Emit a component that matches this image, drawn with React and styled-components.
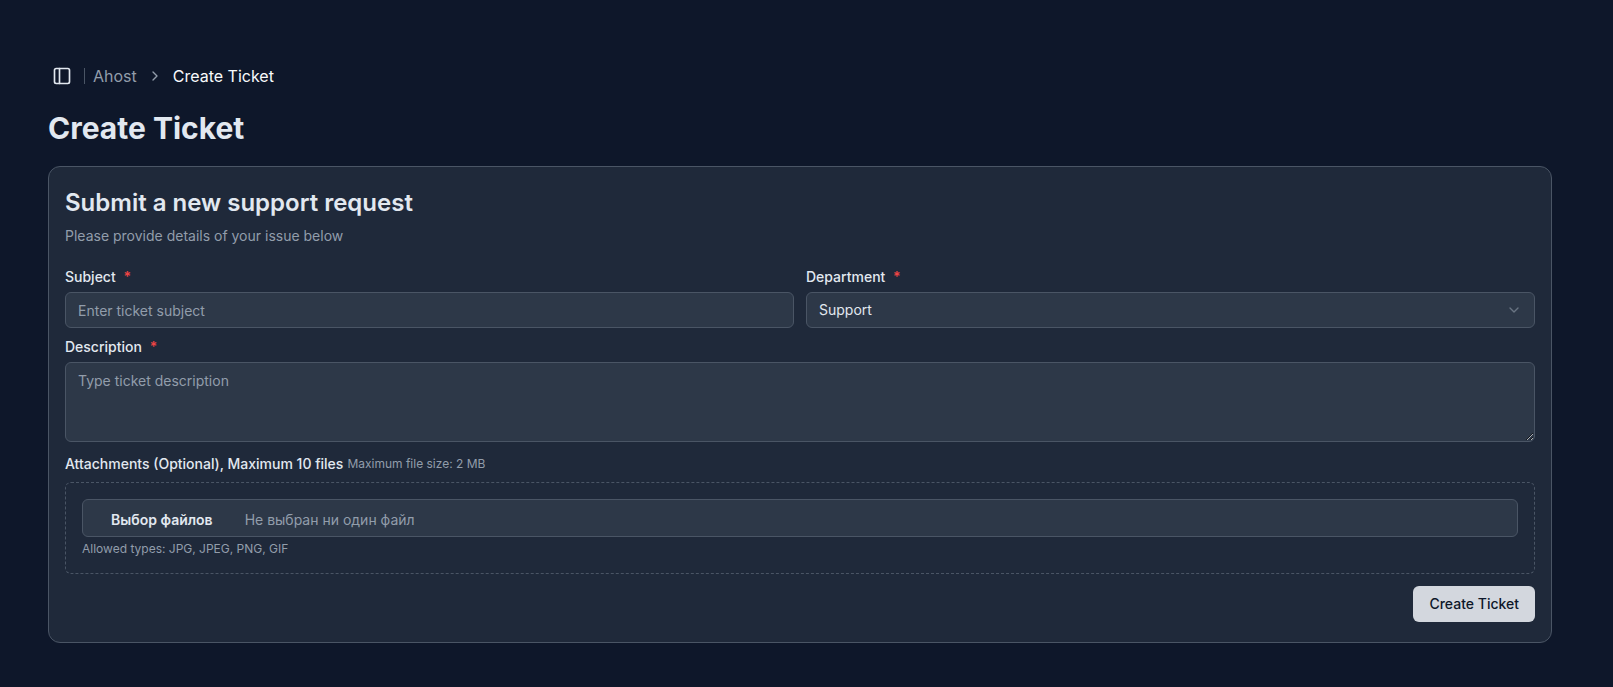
import React, { useState } from 'react';
import styled, { createGlobalStyle, css } from 'styled-components';
import { ChevronDown, ChevronRight, PanelLeft } from 'lucide-react';

const theme = {
    background: '#0e172a',
    card: '#1f293a',
    field: '#2d3848',
    border: '#4a5565',
    text: '#e2e8f0',
    bright: '#f8fafc',
    muted: '#929dab',
    danger: '#ef4444',
    button: '#d3d7de',
};

const GlobalStyle = createGlobalStyle`
    *, *:before, *:after {
        box-sizing: border-box;
    }

    body {
        margin: 0;
        background: ${theme.background};
        color: ${theme.text};
        font-family: Inter, sans-serif;
        font-size: 14px;
        line-height: 20px;
    }

    button, input, select, textarea {
        font: inherit;
        color: inherit;
    }
`;

const Page = styled.main`
    padding: 62px 61px 44px 48px;
`;

const TopBar = styled.header`
    display: flex;
    align-items: center;
    height: 28px;
`;

const IconButton = styled.button`
    display: flex;
    align-items: center;
    justify-content: center;
    width: 28px;
    height: 28px;
    padding: 0;
    border: none;
    border-radius: 6px;
    background: none;
    color: ${theme.text};
    cursor: pointer;
`;

const Separator = styled.span`
    width: 1px;
    height: 16px;
    margin: 0 8px;
    background: ${theme.border};
`;

const Breadcrumb = styled.nav`
    display: flex;
    align-items: center;
    gap: 10px;
    color: ${theme.muted};
    font-size: 16px;
    line-height: 24px;
`;

const Crumb = styled.a`
    color: ${props => props.$current ? theme.bright : theme.muted};
    text-decoration: none;
`;

const PageTitle = styled.h1`
    margin: 20px 0;
    font-size: 30px;
    line-height: 36px;
    font-weight: 700;
`;

const Card = styled.section`
    padding: 16px 16px 20px;
    border: 1px solid ${theme.border};
    border-radius: 12px;
    background: ${theme.card};
`;

const CardTitle = styled.h2`
    margin: 4px 0 7px;
    font-size: 24px;
    line-height: 32px;
    font-weight: 600;
`;

const CardText = styled.p`
    margin: 0;
    color: ${theme.muted};
`;

const Form = styled.form`
    display: flex;
    flex-direction: column;
    gap: 12px;
    margin-top: 24px;
`;

const Columns = styled.div`
    display: grid;
    grid-template-columns: 1fr 1fr;
    gap: 12px;
`;

const Field = styled.div`
    display: flex;
    flex-direction: column;
    gap: 8px;
`;

const Label = styled.label`
    font-weight: 500;
    line-height: 14px;
`;

const Required = styled.span`
    margin-left: 4px;
    color: ${theme.danger};
    font-weight: 600;
`;

const control = css`
    display: block;
    width: 100%;
    border: 1px solid ${theme.border};
    border-radius: 6px;
    outline: none;
    background: ${theme.field};

    &::placeholder {
        color: ${theme.muted};
        opacity: 1;
    }
`;

const Input = styled.input`
    ${control}
    height: 36px;
    padding: 4px 12px;
`;

const TextArea = styled.textarea`
    ${control}
    height: 80px;
    padding: 8px 12px;
    resize: vertical;
`;

const SelectWrapper = styled.div`
    display: grid;
    align-items: center;

    & > * {
        grid-area: 1 / 1;
    }

    & > svg {
        justify-self: end;
        margin-right: 13px;
        color: ${theme.muted};
        opacity: .6;
        pointer-events: none;
    }
`;

const Select = styled.select`
    ${control}
    height: 36px;
    padding: 0 36px 0 12px;
    appearance: none;
`;

const LabelRow = styled.div`
    display: flex;
    align-items: center;
    gap: 4px;
    height: 20px;
`;

const Hint = styled.span`
    color: ${theme.muted};
    font-size: 12px;
    line-height: 16px;
`;

const DropZone = styled.div`
    display: flex;
    flex-direction: column;
    gap: 4px;
    padding: 16px;
    border: 1px dashed ${theme.border};
    border-radius: 6px;
`;

const FilePicker = styled.label`
    ${control}
    display: flex;
    gap: 32px;
    height: 38px;
    padding: 10px 28px 6px;
    color: ${theme.muted};
    cursor: pointer;
`;

const FileButton = styled.span`
    color: ${theme.text};
    font-weight: 600;
`;

const HiddenInput = styled.input`
    position: absolute;
    width: 1px;
    height: 1px;
    overflow: hidden;
    clip-path: inset(50%);
`;

const Actions = styled.div`
    display: flex;
    justify-content: flex-end;
`;

const SubmitButton = styled.button`
    height: 36px;
    padding: 0 16px;
    border: none;
    border-radius: 6px;
    background: ${theme.button};
    color: ${theme.background};
    font-weight: 500;
    cursor: pointer;
`;

export default function App() {
    const [files, setFiles] = useState([]);

    return (
        <Page>
            <GlobalStyle/>
            <TopBar>
                <IconButton type="button" aria-label="Toggle sidebar">
                    <PanelLeft size={20}/>
                </IconButton>
                <Separator/>
                <Breadcrumb>
                    <Crumb href="#">Ahost</Crumb>
                    <ChevronRight size={16}/>
                    <Crumb href="#" $current aria-current="page">Create Ticket</Crumb>
                </Breadcrumb>
            </TopBar>
            <PageTitle>Create Ticket</PageTitle>
            <Card>
                <CardTitle>Submit a new support request</CardTitle>
                <CardText>Please provide details of your issue below</CardText>
                <Form onSubmit={e => e.preventDefault()}>
                    <Columns>
                        <Field>
                            <Label htmlFor="subject">Subject <Required>*</Required></Label>
                            <Input id="subject" placeholder="Enter ticket subject"/>
                        </Field>
                        <Field>
                            <Label htmlFor="department">Department <Required>*</Required></Label>
                            <SelectWrapper>
                                <Select id="department" defaultValue="support">
                                    <option value="support">Support</option>
                                </Select>
                                <ChevronDown size={16}/>
                            </SelectWrapper>
                        </Field>
                    </Columns>
                    <Field>
                        <Label htmlFor="description">Description <Required>*</Required></Label>
                        <TextArea id="description" placeholder="Type ticket description"/>
                    </Field>
                    <Field>
                        <LabelRow>
                            <Label htmlFor="files">Attachments (Optional), Maximum 10 files</Label>
                            <Hint>Maximum file size: 2 MB</Hint>
                        </LabelRow>
                        <DropZone>
                            <FilePicker>
                                <HiddenInput
                                    id="files"
                                    type="file"
                                    multiple
                                    accept=".jpg,.jpeg,.png,.gif"
                                    onChange={e => setFiles(Array.from(e.target.files))}
                                />
                                <FileButton>Выбор файлов</FileButton>
                                <span>
                                    {files.length ? files.map(file => file.name).join(', ') : 'Не выбран ни один файл'}
                                </span>
                            </FilePicker>
                            <Hint>Allowed types: JPG, JPEG, PNG, GIF</Hint>
                        </DropZone>
                    </Field>
                    <Actions>
                        <SubmitButton type="submit">Create Ticket</SubmitButton>
                    </Actions>
                </Form>
            </Card>
        </Page>
    );
}
